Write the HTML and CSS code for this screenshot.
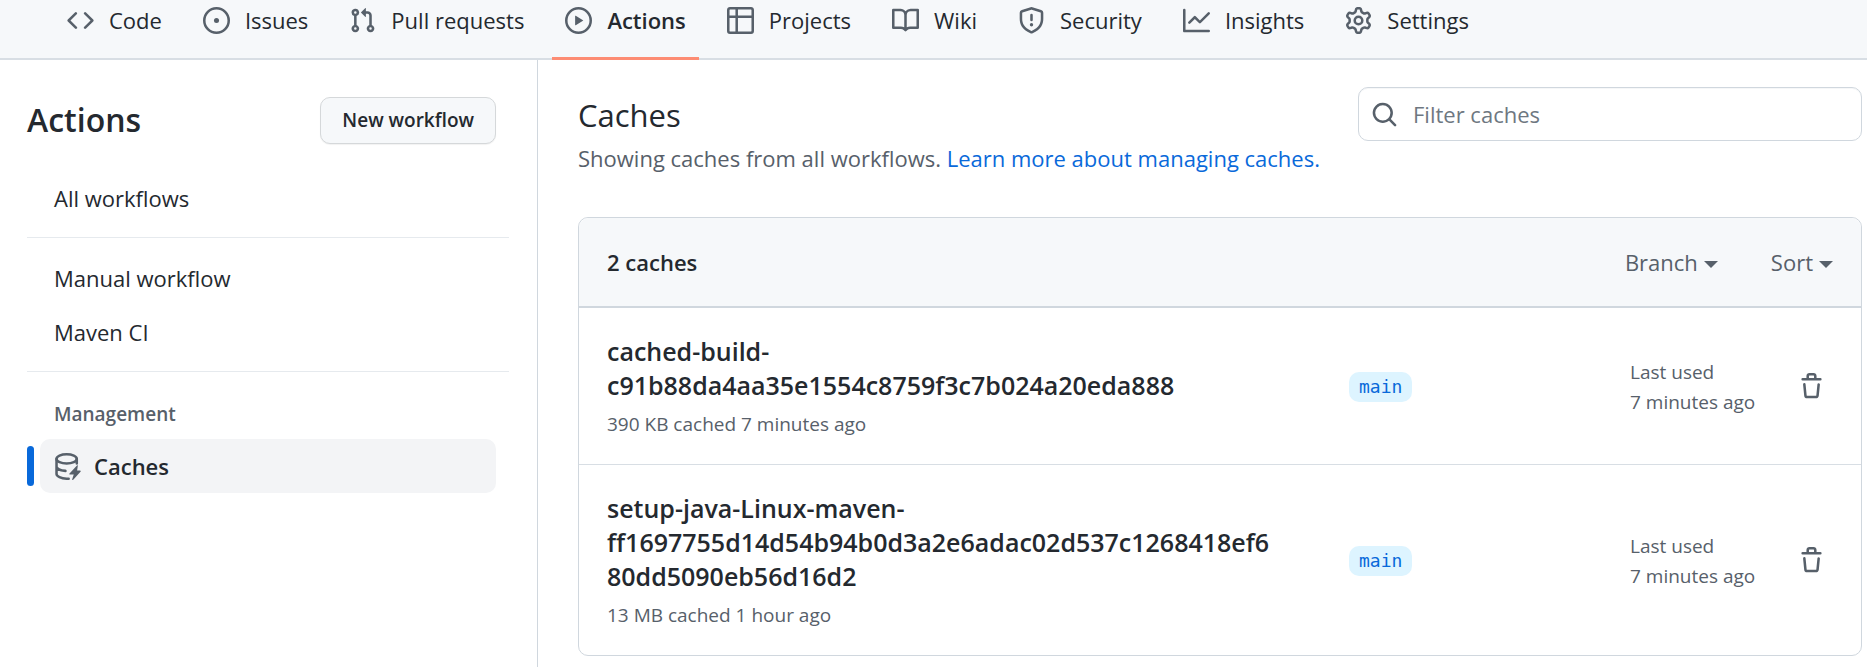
FILE: index.html
```html
<!DOCTYPE html>
<html lang="en">
<head>
<meta charset="utf-8">
<title>Caches · Actions</title>
<link rel="stylesheet" href="styles.css">
</head>
<body>
<svg class="sprite" aria-hidden="true">
  <symbol id="trash" viewBox="0 0 16 16"><path fill-rule="evenodd" d="M6.5 1.75a.25.25 0 01.25-.25h2.5a.25.25 0 01.25.25V3h-3V1.75zm4.5 0V3h2.25a.75.75 0 010 1.5H2.75a.75.75 0 010-1.5H5V1.75C5 .784 5.784 0 6.75 0h2.5C10.216 0 11 .784 11 1.75zM4.496 6.675a.75.75 0 10-1.492.15l.66 6.6A1.75 1.75 0 005.405 15h5.19c.9 0 1.652-.681 1.741-1.576l.66-6.6a.75.75 0 00-1.492-.149l-.66 6.6a.25.25 0 01-.249.225h-5.19a.25.25 0 01-.249-.225l-.66-6.6z"/></symbol>
</svg>
<nav class="tabs" aria-label="Repository">
  <a class="tab" href="#"><svg class="icon" viewBox="0 0 16 16"><path d="M4.72 3.22a.75.75 0 011.06 1.06L2.06 8l3.72 3.72a.75.75 0 11-1.06 1.06L.47 8.53a.75.75 0 010-1.06l4.25-4.25zm6.56 0a.75.75 0 10-1.06 1.06L13.94 8l-3.72 3.72a.75.75 0 101.06 1.06l4.25-4.25a.75.75 0 000-1.06l-4.25-4.25z"/></svg>Code</a>
  <a class="tab" href="#"><svg class="icon" viewBox="0 0 16 16"><path d="M8 9.5a1.5 1.5 0 100-3 1.5 1.5 0 000 3z"/><path fill-rule="evenodd" d="M8 0a8 8 0 100 16A8 8 0 008 0zM1.5 8a6.500 6.500 0 1113 0 6.500 6.500 0 01-13 0z"/></svg>Issues</a>
  <a class="tab" href="#"><svg class="icon" viewBox="0 0 16 16"><path fill-rule="evenodd" d="M7.177 3.073L9.573.677A.25.25 0 0110 .854v4.792a.25.25 0 01-.427.177L7.177 3.427a.25.25 0 010-.354zM3.750 2.500a.75.75 0 100 1.500.75.75 0 000-1.500zm-2.250.75a2.250 2.250 0 113 2.122v5.256a2.251 2.251 0 11-1.500 0V5.372A2.250 2.250 0 011.500 3.250zM11 2.500h-1V4h1a1 1 0 011 1v5.628a2.251 2.251 0 101.500 0V5A2.500 2.500 0 0011 2.500zm1 10.250a.75.75 0 111.500 0 .75.75 0 01-1.500 0zM3.750 12a.75.75 0 100 1.500.75.75 0 000-1.500z"/></svg>Pull requests</a>
  <a class="tab tab-current" href="#" aria-current="page"><svg class="icon" viewBox="0 0 16 16"><path fill-rule="evenodd" d="M1.500 8a6.500 6.500 0 1113 0 6.500 6.500 0 01-13 0zM8 0a8 8 0 100 16A8 8 0 008 0zM6.379 5.227A.25.25 0 006 5.442v5.117a.25.25 0 00.379.214l4.264-2.559a.25.25 0 000-.428L6.379 5.227z"/></svg>Actions</a>
  <a class="tab" href="#"><svg class="icon" viewBox="0 0 16 16"><path fill-rule="evenodd" d="M0 1.750C0 .784.784 0 1.750 0h12.500C15.216 0 16 .784 16 1.750v12.500A1.750 1.750 0 0114.250 16H1.750A1.750 1.750 0 010 14.250V1.750zM1.500 6.500v7.750c0 .138.112.25.25.25H5v-8H1.500zM5 5H1.500V1.750a.25.25 0 01.25-.25H5V5zm1.500 1.500v8h7.750a.25.25 0 00.25-.25V6.500h-8zm8-1.500h-8V1.500h7.750a.25.25 0 01.25.25V5z"/></svg>Projects</a>
  <a class="tab" href="#"><svg class="icon" viewBox="0 0 16 16"><path fill-rule="evenodd" d="M0 1.750A.75.75 0 01.75 1h4.253c1.227 0 2.317.59 3 1.501A3.744 3.744 0 0111.006 1h4.245a.75.75 0 01.75.75v10.500a.75.75 0 01-.75.75h-4.507a2.250 2.250 0 00-1.591.659l-.622.621a.75.75 0 01-1.060 0l-.622-.621A2.250 2.250 0 005.258 13H.75a.75.75 0 01-.75-.75V1.750zm8.755 3a2.250 2.250 0 012.250-2.250H14.500v9h-3.757c-.71 0-1.400.201-1.992.572l.004-7.322zm-1.504 7.324l.004-5.073-.002-2.253A2.250 2.250 0 005.003 2.500H1.500v9h3.757a3.750 3.750 0 011.994.574z"/></svg>Wiki</a>
  <a class="tab" href="#"><svg class="icon" viewBox="0 0 16 16"><path fill-rule="evenodd" d="M7.467.133a1.750 1.750 0 011.066 0l5.250 1.680A1.750 1.750 0 0115 3.480V7c0 1.566-.32 3.182-1.303 4.682-.983 1.498-2.585 2.813-5.032 3.855a1.700 1.700 0 01-1.330 0c-2.447-1.042-4.049-2.357-5.032-3.855C1.320 10.182 1 8.566 1 7V3.480a1.750 1.750 0 011.217-1.667l5.250-1.680zm.61 1.429a.25.25 0 00-.153 0l-5.250 1.680a.25.25 0 00-.174.238V7c0 1.358.275 2.666 1.057 3.860.784 1.194 2.121 2.340 4.366 3.297a.2.2 0 00.154 0c2.245-.956 3.582-2.104 4.366-3.298C13.225 9.666 13.500 8.360 13.500 7V3.480a.25.25 0 00-.174-.237l-5.250-1.680zM8.750 4.750v3a.75.75 0 01-1.500 0v-3a.75.75 0 011.500 0zM9 10.500a1 1 0 11-2 0 1 1 0 012 0z"/></svg>Security</a>
  <a class="tab" href="#"><svg class="icon" viewBox="0 0 16 16"><path fill-rule="evenodd" d="M1.500 1.750a.75.75 0 00-1.500 0v12.500c0 .414.336.75.75.75h14.500a.75.75 0 000-1.500H1.500V1.750zm14.280 2.530a.75.75 0 00-1.060-1.060L10 7.940 7.530 5.470a.75.75 0 00-1.060 0L3.220 8.720a.75.75 0 001.060 1.060L7 7.060l2.470 2.470a.75.75 0 001.060 0l5.250-5.250z"/></svg>Insights</a>
  <a class="tab" href="#"><svg class="icon" viewBox="0 0 16 16"><path fill-rule="evenodd" d="M7.429 1.525a6.593 6.593 0 011.142 0c.036.003.108.036.137.146l.289 1.105c.147.56.55.967.997 1.189.174.086.341.183.501.29.417.278.97.423 1.530.27l1.102-.303c.11-.03.175.016.195.046.219.31.41.641.573.989.014.031.022.110-.059.190l-.815.806c-.411.406-.562.957-.530 1.456a4.588 4.588 0 010 .582c-.032.499.119 1.050.530 1.456l.815.806c.080.080.073.159.059.190a6.494 6.494 0 01-.573.990c-.020.029-.086.074-.195.045l-1.103-.303c-.559-.153-1.112-.008-1.529.270-.160.107-.327.204-.500.290-.449.222-.851.628-.998 1.189l-.289 1.105c-.029.110-.101.143-.137.146a6.613 6.613 0 01-1.142 0c-.036-.003-.108-.037-.137-.146l-.289-1.105c-.147-.560-.550-.967-.997-1.189a4.502 4.502 0 01-.501-.290c-.417-.278-.970-.423-1.530-.270l-1.102.303c-.110.030-.175-.016-.195-.046a6.492 6.492 0 01-.573-.989c-.014-.031-.022-.110.059-.190l.815-.806c.411-.406.562-.957.530-1.456a4.587 4.587 0 010-.582c.032-.499-.119-1.050-.530-1.456l-.815-.806c-.080-.080-.073-.159-.059-.190a6.440 6.440 0 01.573-.990c.020-.029.086-.075.195-.045l1.103.303c.559.153 1.112.008 1.529-.270.160-.107.327-.204.500-.290.449-.222.851-.628.998-1.189l.289-1.105c.029-.110.101-.143.137-.146zM8 0c-.236 0-.470.010-.701.030-.743.065-1.290.615-1.458 1.261l-.290 1.106c-.017.066-.078.158-.211.224a5.994 5.994 0 00-.668.386c-.123.082-.233.090-.300.071L3.270 2.776c-.644-.177-1.392.020-1.820.630a7.977 7.977 0 00-.704 1.217c-.315.675-.111 1.422.363 1.891l.815.806c.050.048.098.147.088.294a6.084 6.084 0 000 .772c.010.147-.038.246-.088.294l-.815.806c-.474.469-.678 1.216-.363 1.891.200.428.436.835.704 1.218.428.609 1.176.806 1.820.630l1.103-.303c.066-.019.176-.011.299.071.213.143.436.272.668.386.133.066.194.158.212.224l.289 1.106c.169.646.715 1.196 1.458 1.260a8.094 8.094 0 001.402 0c.743-.064 1.290-.614 1.458-1.260l.290-1.106c.017-.066.078-.158.211-.224a5.980 5.980 0 00.668-.386c.123-.082.233-.090.300-.071l1.102.302c.644.177 1.392-.020 1.820-.630.268-.382.505-.789.704-1.217.315-.675.111-1.422-.364-1.891l-.814-.806c-.050-.048-.098-.147-.088-.294a6.100 6.100 0 000-.772c-.010-.147.039-.246.088-.294l.814-.806c.475-.469.679-1.216.364-1.891a7.992 7.992 0 00-.704-1.218c-.428-.609-1.176-.806-1.820-.630l-1.103.303c-.066.019-.176.011-.299-.071a5.991 5.991 0 00-.668-.386c-.133-.066-.194-.158-.212-.224L10.160 1.290C9.990.645 9.444.095 8.701.031A8.094 8.094 0 008 0zm1.500 8a1.500 1.500 0 11-3 0 1.500 1.500 0 013 0zM11 8a3 3 0 11-6 0 3 3 0 016 0z"/></svg>Settings</a>
</nav>
<div class="layout">
  <aside class="sidebar">
    <div class="sidebar-head">
      <h2 class="sidebar-title">Actions</h2>
      <button class="button" type="button">New workflow</button>
    </div>
    <ul class="menu">
      <li><a class="menu-link" href="#">All workflows</a></li>
    </ul>
    <ul class="menu menu-divided">
      <li><a class="menu-link" href="#">Manual workflow</a></li>
      <li><a class="menu-link" href="#">Maven CI</a></li>
    </ul>
    <div class="menu-divided">
      <h3 class="menu-heading">Management</h3>
      <ul class="menu">
        <li class="menu-current"><a class="menu-link" href="#" aria-current="page"><svg class="icon" viewBox="0 0 16 16"><g fill="none" stroke="currentColor" stroke-width="1.500" stroke-linecap="round"><ellipse cx="7.500" cy="3.500" rx="6" ry="2.700"/><path d="M1.500 3.500v9c0 1.400 2.600 2.600 6 2.750h1.200M1.500 8c0 1.300 2.200 2.400 5.300 2.600M13.500 3.500v2.700"/></g><path d="M13.600 7.400L9.200 12.100c-.3.300-.1.700.3.700h2.200l-.9 2.700c-.2.500.3.700.6.400l4.300-4.800c.3-.3.100-.7-.3-.7h-1.700l.4-2.700c.1-.5-.2-.6-.5-.3z"/></svg>Caches</a></li>
      </ul>
    </div>
  </aside>
  <main class="content">
    <header class="page-head">
      <div class="page-intro">
        <h1 class="page-title">Caches</h1>
        <p class="page-text">Showing caches from all workflows. <a class="link" href="#">Learn more about managing caches.</a></p>
      </div>
      <label class="filter">
        <svg class="icon filter-icon" viewBox="0 0 16 16"><path fill-rule="evenodd" d="M11.500 7a4.499 4.499 0 11-8.998 0A4.499 4.499 0 0111.500 7zm-.820 4.740a6 6 0 111.060-1.060l3.040 3.040a.75.75 0 11-1.060 1.060l-3.040-3.040z"/></svg>
        <input class="filter-input" type="text" placeholder="Filter caches" aria-label="Filter caches">
      </label>
    </header>
    <section class="box">
      <div class="box-head">
        <h2 class="box-title">2 caches</h2>
        <div class="box-menus">
          <button class="dropdown" type="button" aria-haspopup="true">Branch<span class="caret"></span></button>
          <button class="dropdown" type="button" aria-haspopup="true">Sort<span class="caret"></span></button>
        </div>
      </div>
      <ul class="rows">
        <li class="row">
          <div class="row-main">
            <h3 class="row-title">cached-build-c91b88da4aa35e1554c8759f3c7b024a20eda888</h3>
            <p class="row-meta">390 KB cached 7 minutes ago</p>
          </div>
          <div class="row-branch"><a class="branch" href="#">main</a></div>
          <p class="row-used">Last used<br>7 minutes ago</p>
          <button class="icon-button" type="button" aria-label="Delete cache"><svg class="icon"><use href="#trash"/></svg></button>
        </li>
        <li class="row">
          <div class="row-main">
            <h3 class="row-title">setup-java-Linux-maven-ff1697755d14d54b94b0d3a2e6adac02d537c1268418ef680dd5090eb56d16d2</h3>
            <p class="row-meta">13 MB cached 1 hour ago</p>
          </div>
          <div class="row-branch"><a class="branch" href="#">main</a></div>
          <p class="row-used">Last used<br>7 minutes ago</p>
          <button class="icon-button" type="button" aria-label="Delete cache"><svg class="icon"><use href="#trash"/></svg></button>
        </li>
      </ul>
    </section>
  </main>
</div>
</body>
</html>
```
FILE: styles.css
```css
:root {
  --fg: #24292f;
  --muted: #57606a;
  --border: #d0d7de;
  --subtle: #f6f8fa;
  --accent: #0969da;
}

* {
  box-sizing: border-box;
  margin: 0;
  padding: 0;
}

body {
  display: flex;
  flex-direction: column;
  min-height: 100vh;
  background: #fff;
  color: var(--fg);
  font: 400 22px/34px "Open Sans", "Noto Sans", sans-serif;
}

ul {
  list-style: none;
}

a {
  color: inherit;
  text-decoration: none;
}

button,
input {
  color: inherit;
  font: inherit;
}

button {
  cursor: pointer;
}

.sprite {
  display: none;
}

.icon {
  flex: none;
  width: 27px;
  height: 27px;
  fill: var(--muted);
  color: var(--muted);
}

/* Repository tabs */
.tabs {
  display: flex;
  gap: 15px;
  padding: 0 54px;
  background: var(--subtle);
  border-bottom: 2px solid #d8dee4;
}

.tab {
  display: flex;
  align-items: center;
  gap: 15px;
  margin-bottom: -2px;
  padding: 3px 13px 20px;
  border-bottom: 3px solid transparent;
  white-space: nowrap;
}

.tab-current {
  border-bottom-color: #fd8c73;
  font-weight: 600;
}

/* Sidebar */
.layout {
  display: grid;
  grid-template-columns: 538px minmax(0, 1fr);
  flex: 1;
}

.sidebar {
  padding: 36px 28px 0 27px;
  border-right: 1px solid var(--border);
}

.sidebar-head {
  display: flex;
  align-items: center;
  justify-content: space-between;
  margin-bottom: 27px;
  padding-right: 13px;
}

.sidebar-title {
  font-size: 32px;
  font-weight: 600;
  line-height: 48px;
}

.button {
  padding: 0 21px;
  border: 1px solid #d5d8da;
  border-radius: 10px;
  background: var(--subtle);
  box-shadow: 0 1px 1px rgba(27, 31, 36, 0.06);
  font-size: 19px;
  font-weight: 600;
  line-height: 45px;
}

.menu-divided {
  margin-top: 12px;
  padding-top: 13px;
  border-top: 1px solid #e6eaee;
}

.menu-link {
  display: flex;
  align-items: center;
  gap: 13px;
  margin: 0 13px;
  padding: 10px 14px;
  border-radius: 10px;
}

.menu-heading {
  padding: 14px 27px 10px;
  color: var(--muted);
  font-size: 19px;
  font-weight: 600;
  line-height: 30px;
}

.menu-current {
  position: relative;
  font-weight: 600;
}

.menu-current::before {
  content: "";
  position: absolute;
  top: 7px;
  bottom: 7px;
  left: 0;
  width: 7px;
  border-radius: 4px;
  background: var(--accent);
}

.menu-current .menu-link {
  background: #f3f4f6;
}

/* Page */
.content {
  padding: 27px 5px 7px 40px;
}

.page-head {
  display: flex;
  align-items: flex-start;
  justify-content: space-between;
  gap: 20px;
  margin-bottom: 40px;
}

.page-title {
  margin-bottom: 4px;
  padding-top: 6px;
  font-size: 31px;
  font-weight: 400;
  line-height: 44px;
}

.page-text {
  padding-bottom: 2px;
  color: var(--muted);
}

.link {
  color: var(--accent);
}

.filter {
  display: flex;
  align-items: center;
  gap: 15px;
  width: 504px;
  padding: 0 12px;
  border: 1px solid var(--border);
  border-radius: 10px;
  box-shadow: inset 0 1px 0 rgba(208, 215, 222, 0.2);
}

.filter-input {
  flex: 1;
  min-width: 0;
  height: 52px;
  border: 0;
  outline: 0;
  background: transparent;
}

.filter-input::placeholder {
  color: #6e7781;
  opacity: 1;
}

/* Cache list */
.box {
  border: 1px solid var(--border);
  border-radius: 10px;
}

.box-head {
  display: flex;
  align-items: center;
  justify-content: space-between;
  padding: 27px 28px;
  border-bottom: 2px solid var(--border);
  border-radius: 10px 10px 0 0;
  background: var(--subtle);
}

.box-title {
  font-size: 22px;
  font-weight: 600;
}

.box-menus {
  display: flex;
  gap: 53px;
}

.dropdown {
  display: flex;
  align-items: center;
  gap: 6px;
  border: 0;
  background: transparent;
  color: var(--muted);
}

.caret {
  margin-top: 4px;
  border: 7px solid transparent;
  border-top-color: currentColor;
  border-bottom: 0;
}

.row {
  display: grid;
  grid-template-columns: minmax(0, 742fr) minmax(0, 281fr) minmax(0, 168fr) auto;
  align-items: center;
  padding: 26px 36px 25px 28px;
}

.row + .row {
  border-top: 1px solid #d8dee4;
}

.row-main {
  padding-right: 72px;
}

.row-title {
  margin-bottom: 7px;
  font-size: 25px;
  font-weight: 600;
  line-height: 34px;
  overflow-wrap: anywhere;
}

.row-meta,
.row-used {
  color: var(--muted);
  font-size: 19px;
  line-height: 30px;
}

.row-branch {
  display: flex;
}

.branch {
  padding: 0 10px;
  border-radius: 10px;
  background: #ddf4ff;
  color: var(--accent);
  font: 18px/30px "DejaVu Sans Mono", monospace;
}

.icon-button {
  display: flex;
  border: 0;
  background: transparent;
}
```
